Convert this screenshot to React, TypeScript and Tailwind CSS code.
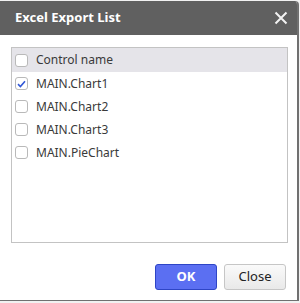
const rows = [
    { name: "MAIN.Chart1", checked: true },
    { name: "MAIN.Chart2", checked: false },
    { name: "MAIN.Chart3", checked: false },
    { name: "MAIN.PieChart", checked: false },
];

const Box = (props: { checked: boolean }) => {
    return (
        <span className="w-[13px] h-[13px] rounded-[3px] border border-[#b9b9b9] bg-white flex items-center justify-center shrink-0">
            {props.checked && (
                <svg width="9" height="8" viewBox="0 0 9 8">
                    <path
                        d="M1 4.2 L3.4 6.5 L8 1.3"
                        fill="none"
                        stroke="#3157d6"
                        strokeWidth="1.6"
                    />
                </svg>
            )}
        </span>
    );
};

const App = () => {
    return (
        <div className="w-[300px] h-[303px] bg-[#f1f1f1] overflow-hidden font-['Noto_Sans',sans-serif]">
            <div className="mt-[1px] w-[299px] h-[300px] bg-white border-r-2 border-b border-[#707070] rounded-tr-[4px] overflow-hidden flex flex-col">
                <div className="h-[34px] bg-[#606060] flex items-center justify-between pl-[15px] pr-[9px]">
                    <span className="text-white text-[13px] font-bold">Excel Export List</span>
                    <svg width="14" height="14" viewBox="0 0 14 14">
                        <path d="M1.5 1.5 L12.5 12.5 M12.5 1.5 L1.5 12.5" stroke="#f2f2f2" strokeWidth="2" />
                    </svg>
                </div>
                <div className="px-[11px] pt-[12px]">
                    <div className="w-[277px] h-[196px] border border-[#c3c3c3] flex flex-col">
                        <div className="h-[24px] bg-[#e5e4e9] flex items-center gap-[8px] pl-[3px] text-[12px] text-[#3a3a3a]">
                            <Box checked={false} />
                            <span>Control name</span>
                        </div>
                        {rows.map((r) => (
                            <div
                                key={r.name}
                                className="h-[23px] flex items-center gap-[8px] pl-[3px] text-[12px] text-[#3a3a3a]"
                            >
                                <Box checked={r.checked} />
                                <span>{r.name}</span>
                            </div>
                        ))}
                    </div>
                </div>
                <div className="flex justify-end gap-[7px] pr-[11px] mt-[21px]">
                    <button className="w-[62px] h-[26px] rounded-[3px] border border-[#2e45c6] bg-[#5b6ff2] text-white text-[13px] font-bold">
                        OK
                    </button>
                    <button className="w-[62px] h-[26px] rounded-[3px] border border-[#c6c6c6] bg-gradient-to-b from-[#fafafa] to-[#e9e9e9] text-[#222] text-[13px]">
                        Close
                    </button>
                </div>
            </div>
        </div>
    );
};

export default App;
